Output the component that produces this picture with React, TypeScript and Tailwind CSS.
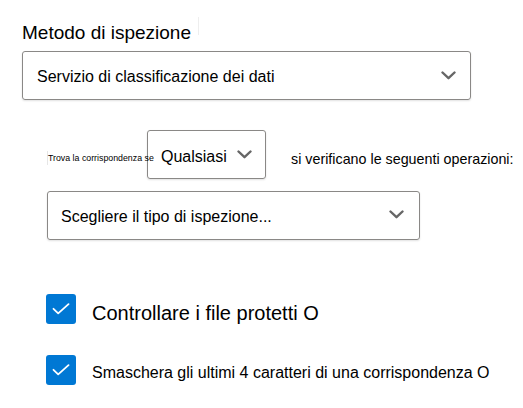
import React from "react";

function Chevron({ className = "" }: { className?: string }) {
  return (
    <svg className={className} width="15" height="9" viewBox="0 0 15 9" fill="none">
      <path d="M1.5 1.5 L7.5 7.2 L13.5 1.5" stroke="#666666" strokeWidth="2.4" strokeLinecap="round" strokeLinejoin="round" />
    </svg>
  );
}

function Check() {
  return (
    <div className="w-[30px] h-[30px] rounded-[3px] bg-[#0078d4] flex items-center justify-center shrink-0">
      <svg width="18" height="12" viewBox="0 0 18 12" fill="none">
        <path d="M1.5 5.8 L6.2 10.3 L16.5 1.2" stroke="white" strokeWidth="1.8" strokeLinecap="round" strokeLinejoin="round" />
      </svg>
    </div>
  );
}

export default function App() {
  return (
    <div className="w-[523px] h-[408px] bg-white text-black font-['Liberation_Sans',Arial,sans-serif] overflow-hidden">
      <div className="pl-[22px] pt-[21px]">
        <div className="flex items-start">
          <span className="text-[19px] leading-[24px]">Metodo di ispezione</span>
          <span className="ml-[7px] mt-[-4px] w-px h-[18px] bg-[#eeeeee]" />
        </div>
        <div className="mt-[6px] w-[449px] h-[49px] border border-[#8a8886] rounded-[3px] shadow-[0_1px_2px_rgba(0,0,0,0.12)] flex items-start justify-between pl-[14px] pr-[14px]">
          <span className="text-[16px] leading-[18px] pt-[16px]">Servizio di classificazione dei dati</span>
          <Chevron className="mt-[19px]" />
        </div>
      </div>

      <div className="ml-[47px] mt-[30px] flex items-start">
        <div className="w-[100px] shrink-0 mt-[21px] flex">
          <span className="relative z-10 border-l border-[#e6e6e6] text-[8.8px] leading-[14px] whitespace-nowrap">Trova la corrispondenza se</span>
        </div>
        <div className="w-[119px] h-[49px] border border-[#8a8886] rounded-[3px] shadow-[0_1px_2px_rgba(0,0,0,0.12)] flex items-start pl-[13px]">
          <span className="text-[16px] leading-[18px] pt-[17px]">Qualsiasi</span>
          <Chevron className="ml-[10px] mt-[19px]" />
        </div>
        <span className="ml-[25px] mt-[21px] text-[14.3px] leading-[17px] whitespace-nowrap">si verificano le seguenti operazioni:</span>
      </div>

      <div className="ml-[47px] mt-[12px] w-[373px] h-[49px] border border-[#8a8886] rounded-[3px] shadow-[0_1px_2px_rgba(0,0,0,0.12)] flex items-start justify-between pl-[13px] pr-[15px]">
        <span className="text-[16px] leading-[18px] pt-[16px]">Scegliere il tipo di ispezione...</span>
        <Chevron className="mt-[18px]" />
      </div>

      <div className="ml-[46px] mt-[54px] flex items-start gap-[16px]">
        <Check />
        <span className="mt-[8px] text-[20px] leading-[23px] whitespace-nowrap">Controllare i file protetti O</span>
      </div>

      <div className="ml-[46px] mt-[30px] flex items-start gap-[16px]">
        <Check />
        <span className="mt-[9px] text-[16px] leading-[18px] whitespace-nowrap">Smaschera gli ultimi 4 caratteri di una corrispondenza O</span>
      </div>
    </div>
  );
}
